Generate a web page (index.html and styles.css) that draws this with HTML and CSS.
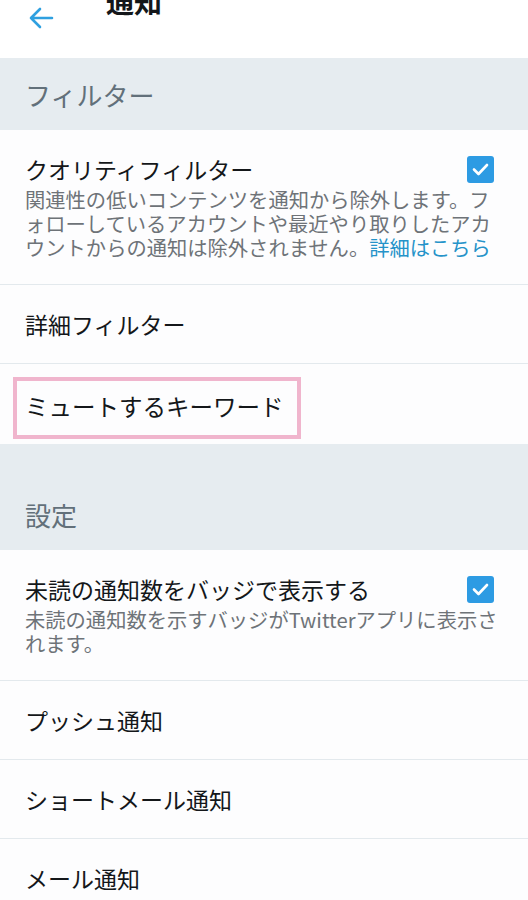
FILE: index.html
```html
<!DOCTYPE html>
<html lang="ja">
<head>
    <meta charset="UTF-8">
    <title>通知</title>
    <meta name="viewport" content="width=device-width, initial-scale=1.0">
    <link rel="stylesheet" href="styles.css">
</head>
<body>
    <!-- Top bar -->
    <header class="topbar">
        <svg class="back" width="26" height="22" viewBox="0 0 26 22">
            <path d="M24 11 H3 M12 2 L3 11 L12 20" fill="none" stroke="#2fa0e0" stroke-width="2.6" stroke-linecap="round" stroke-linejoin="round"/>
        </svg>
        <h1 class="title">通知</h1>
    </header>

    <!-- Filters -->
    <div class="section-head">フィルター</div>
    <div class="row row-detail">
        <div class="row-top">
            <span class="row-title">クオリティフィルター</span>
            <span class="check">
                <svg width="17" height="13" viewBox="0 0 17 13">
                    <path d="M2 6.5 L6.5 11 L15 2" fill="none" stroke="#fff" stroke-width="2.6" stroke-linecap="round" stroke-linejoin="round"/>
                </svg>
            </span>
        </div>
        <p class="row-desc">関連性の低いコンテンツを通知から除外します。フ<br>ォローしているアカウントや最近やり取りしたアカ<br>ウントからの通知は除外されません。<a class="link" href="#">詳細はこちら</a></p>
    </div>
    <div class="row">詳細フィルター</div>
    <div class="row row-mark">
        <span class="mark"></span>
        ミュートするキーワード
    </div>

    <!-- Settings -->
    <div class="section-head section-gap">設定</div>
    <div class="row row-detail">
        <div class="row-top">
            <span class="row-title">未読の通知数をバッジで表示する</span>
            <span class="check">
                <svg width="17" height="13" viewBox="0 0 17 13">
                    <path d="M2 6.5 L6.5 11 L15 2" fill="none" stroke="#fff" stroke-width="2.6" stroke-linecap="round" stroke-linejoin="round"/>
                </svg>
            </span>
        </div>
        <p class="row-desc">未読の通知数を示すバッジがTwitterアプリに表示さ<br>れます。</p>
    </div>
    <div class="row">プッシュ通知</div>
    <div class="row">ショートメール通知</div>
    <div class="row">メール通知</div>
</body>
</html>
```

FILE: styles.css
```css
/* ====== Base ====== */
body {
    margin: 0;
    background: #fdfdfe;
    font-family: "Noto Sans CJK JP", "Noto Sans", sans-serif;
    color: #14171a;
    overflow: hidden;
}

/* ====== Top bar ====== */
.topbar {
    height: 58px;
    display: flex;
    align-items: flex-start;
    padding-left: 28px;
    background: #fff;
    overflow: hidden;
}
.back {
    margin-top: 7px;
}
.title {
    margin: -13px 0 0 52px;
    font-size: 28px;
    line-height: 28px;
    font-weight: 700;
}

/* ====== Section headers ====== */
.section-head {
    background: #e6ecf0;
    color: #62707a;
    font-size: 26px;
    line-height: 34px;
    padding: 20px 25px 18px;
}
.section-gap {
    padding-top: 54px;
}

/* ====== Rows ====== */
.row {
    position: relative;
    font-size: 23px;
    line-height: 32px;
    padding: 23px 25px;
    border-bottom: 1px solid #e3e9ed;
}
.row-detail {
    padding: 24px 34px 25px 25px;
}
.row-top {
    display: flex;
    justify-content: space-between;
    align-items: flex-start;
}
.row-title {
    line-height: 30px;
}
.check {
    width: 27px;
    height: 27px;
    margin-top: 2px;
    border-radius: 3px;
    background: #2d9be3;
    display: flex;
    align-items: center;
    justify-content: center;
}
.row-desc {
    margin: 3px 0 0;
    font-size: 20.3px;
    line-height: 24px;
    color: #6e7378;
    white-space: nowrap;
}
.link {
    color: #2593c9;
    text-decoration: none;
}

/* ====== Highlight box ====== */
.row-mark {
    border-bottom: none;
    padding-top: 26px;
    padding-bottom: 22px;
    font-size: 23.5px;
}
.mark {
    position: absolute;
    left: 13px;
    top: 13px;
    width: 280px;
    height: 54px;
    border: 4px solid #f0b5cd;
}
```
